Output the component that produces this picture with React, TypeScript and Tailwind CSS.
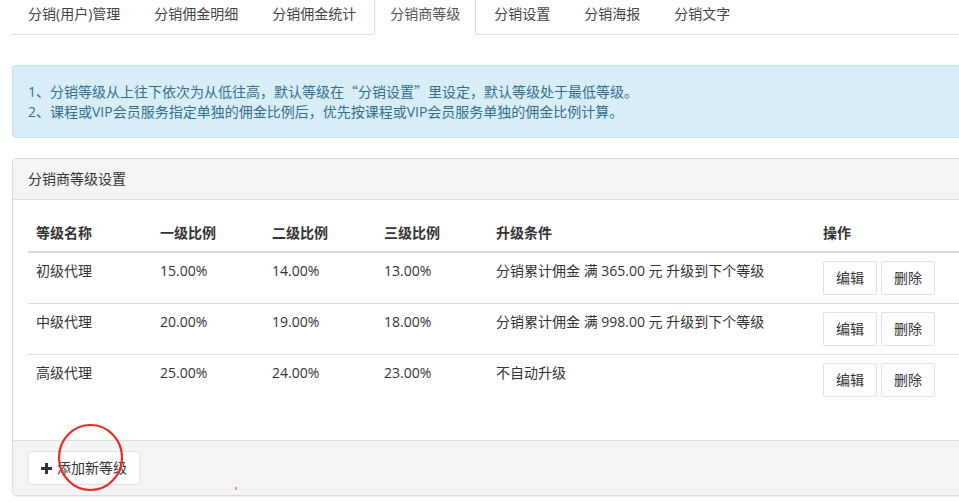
import React from "react";

const font = { fontFamily: '"Open Sans", "Noto Sans CJK SC", sans-serif' };
const cjk = { fontFamily: '"Noto Sans CJK SC", sans-serif' };

const tabs = ["分销(用户)管理", "分销佣金明细", "分销佣金统计", "分销商等级", "分销设置", "分销海报", "分销文字"];

const rows = [
  { name: "初级代理", a: "15.00%", b: "14.00%", c: "13.00%", cond: "分销累计佣金 满 365.00 元 升级到下个等级" },
  { name: "中级代理", a: "20.00%", b: "19.00%", c: "18.00%", cond: "分销累计佣金 满 998.00 元 升级到下个等级" },
  { name: "高级代理", a: "25.00%", b: "24.00%", c: "23.00%", cond: "不自动升级" },
];

function Btn({ children }: { children: React.ReactNode }) {
  return (
    <span className="inline-flex h-[34px] items-center border border-[#e2e2e2] bg-white px-[12px] text-[14px] leading-[20px] text-[#333] rounded-[2px]">
      {children}
    </span>
  );
}

export default function App() {
  return (
    <div className="relative h-[502px] w-[959px] overflow-hidden bg-white text-[14px] text-[#333]" style={font}>
      <div className="w-[1010px] pl-[12px]">
        {/* tabs */}
        <ul className="mt-[-8px] flex border-b border-[#ddd]">
          {tabs.map((t, i) => {
            const active = i === 3;
            return (
              <li key={t} className="mb-[-1px] mr-[2px]">
                <span
                  className={
                    "block border px-[15px] pb-[10px] pt-[11px] leading-[20px] " +
                    (active
                      ? "border-[#ddd] border-b-transparent bg-white text-[#555]"
                      : "border-transparent text-[#444]")
                  }
                >
                  {t}
                </span>
              </li>
            );
          })}
        </ul>

        {/* alert */}
        <div className="mt-[30px] rounded-[4px] border border-[#bce8f1] bg-[#d9edf7] p-[15px] leading-[20px] text-[#31708f]">
          <div>
            1、分销等级从上往下依次为从低往高，默认等级在<span style={cjk}>“</span>分销设置<span style={cjk}>”</span>里设定，默认等级处于最低等级。
          </div>
          <div>2、课程或VIP会员服务指定单独的佣金比例后，优先按课程或VIP会员服务单独的佣金比例计算。</div>
        </div>

        {/* panel */}
        <div className="mt-[20px] rounded-[4px] border border-[#ddd] bg-white shadow-[0_1px_1px_rgba(0,0,0,0.05)]">
          <div className="border-b border-[#ddd] bg-[#f4f4f4] px-[15px] py-[10px] leading-[20px] text-[#333]">
            分销商等级设置
          </div>
          <div className="p-[15px]">
            <table className="mb-[20px] w-full table-fixed border-collapse">
              <thead>
                <tr>
                  <th className="w-[124px] border-b-2 border-[#ddd] p-[8px] text-left align-bottom font-bold leading-[20px]">等级名称</th>
                  <th className="w-[112px] border-b-2 border-[#ddd] p-[8px] text-left align-bottom font-bold leading-[20px]">一级比例</th>
                  <th className="w-[112px] border-b-2 border-[#ddd] p-[8px] text-left align-bottom font-bold leading-[20px]">二级比例</th>
                  <th className="w-[112px] border-b-2 border-[#ddd] p-[8px] text-left align-bottom font-bold leading-[20px]">三级比例</th>
                  <th className="w-[327px] border-b-2 border-[#ddd] p-[8px] text-left align-bottom font-bold leading-[20px]">升级条件</th>
                  <th className="border-b-2 border-[#ddd] p-[8px] text-left align-bottom font-bold leading-[20px]">操作</th>
                </tr>
              </thead>
              <tbody>
                {rows.map((r, i) => (
                  <tr key={r.name}>
                    <td className={"p-[8px] align-top leading-[20px] " + (i > 0 ? "border-t border-[#ddd]" : "")}>{r.name}</td>
                    <td className={"p-[8px] align-top leading-[20px] " + (i > 0 ? "border-t border-[#ddd]" : "")}>{r.a}</td>
                    <td className={"p-[8px] align-top leading-[20px] " + (i > 0 ? "border-t border-[#ddd]" : "")}>{r.b}</td>
                    <td className={"p-[8px] align-top leading-[20px] " + (i > 0 ? "border-t border-[#ddd]" : "")}>{r.c}</td>
                    <td className={"whitespace-nowrap p-[8px] align-top leading-[20px] " + (i > 0 ? "border-t border-[#ddd]" : "")}>{r.cond}</td>
                    <td className={"p-[8px] align-top leading-[20px] " + (i > 0 ? "border-t border-[#ddd]" : "")}>
                      <div className="flex gap-[4px]">
                        <Btn>编辑</Btn>
                        <Btn>删除</Btn>
                      </div>
                    </td>
                  </tr>
                ))}
              </tbody>
            </table>
          </div>
          <div className="border-t border-[#ddd] bg-[#f4f4f4] px-[15px] py-[10px]">
            <Btn>
              <svg width="11" height="11" viewBox="0 0 11 11" className="mr-[5px]">
                <path d="M4 0h3v4h4v3H7v4H4V7H0V4h4z" fill="#333" />
              </svg>
              添加新等级
            </Btn>
          </div>
        </div>
      </div>

      {/* annotation overlay */}
      <svg className="pointer-events-none absolute left-0 top-0" width="959" height="502">
        <ellipse cx="90.5" cy="457.5" rx="31.5" ry="32.5" fill="none" stroke="#ea2a2a" strokeWidth="2.2" />
        <rect x="235.5" y="487" width="1" height="3" fill="#ea2a2a" />
      </svg>
    </div>
  );
}
